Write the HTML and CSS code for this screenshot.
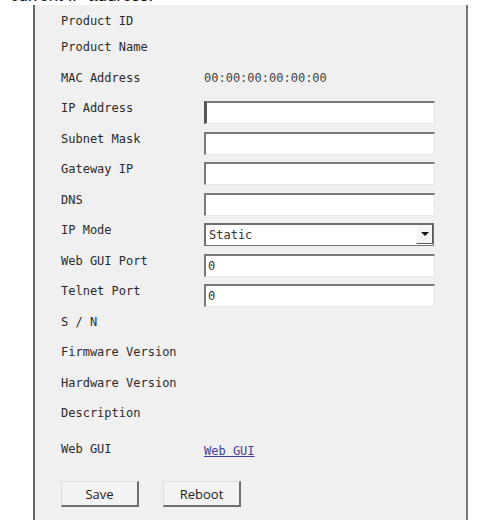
FILE: index.html
```html
<!DOCTYPE html>
<html>
<head>
  <title>device settings</title>
  <meta charset="utf-8">
  <link rel="stylesheet" href="styles.css">
</head>
<body>
  <p class="intro">current IP address.</p>
  <div class="panel">
    <div class="row first"><span class="label">Product ID</span></div>
    <div class="row"><span class="label">Product Name</span></div>
    <div class="row"><span class="label">MAC Address</span><span class="value">00:00:00:00:00:00</span></div>
    <div class="row"><span class="label">IP Address</span><input class="field focused" type="text" value=""></div>
    <div class="row"><span class="label">Subnet Mask</span><input class="field" type="text" value=""></div>
    <div class="row"><span class="label">Gateway IP</span><input class="field" type="text" value=""></div>
    <div class="row"><span class="label">DNS</span><input class="field" type="text" value=""></div>
    <div class="row">
      <span class="label">IP Mode</span>
      <div class="select-wrap">
        <select class="field select">
          <option>Static</option>
          <option>DHCP</option>
        </select>
        <span class="arrow"></span>
      </div>
    </div>
    <div class="row"><span class="label">Web GUI Port</span><input class="field" type="text" value="0"></div>
    <div class="row"><span class="label">Telnet Port</span><input class="field" type="text" value="0"></div>
    <div class="row"><span class="label">S / N</span></div>
    <div class="row"><span class="label">Firmware Version</span></div>
    <div class="row"><span class="label">Hardware Version</span></div>
    <div class="row"><span class="label">Description</span></div>
    <div class="row webgui"><span class="label">Web GUI</span><a class="link" href="#">Web GUI</a></div>
    <div class="actions">
      <button class="btn">Save</button>
      <button class="btn">Reboot</button>
    </div>
  </div>
</body>
</html>
```

FILE: styles.css
```css
body {
  margin: 0;
  background-color: #fff;
  font-family: "DejaVu Sans Mono", monospace;
  color: #2b2b2b;
}
.intro {
  margin: -13px 0 0;
  padding-left: 10px;
  height: 18px;
  font-family: "Liberation Sans", sans-serif;
  font-size: 17px;
  line-height: 17px;
  color: #111;
}
.panel {
  margin-left: 33px;
  width: 405px;
  height: 520px;
  padding: 5px 0 0 26px;
  background-color: #f0f0f0;
  border-left: 2px solid #666;
  border-right: 2px solid #777;
}
.row {
  display: flex;
  align-items: flex-start;
  height: 30.5px;
  font-size: 12px;
}
.row.first {
  height: 26px;
}
.row.webgui {
  margin-top: 5px;
}
.label {
  width: 143px;
  flex: none;
  padding-top: 3px;
  line-height: 16px;
}
.value {
  padding-top: 3px;
  line-height: 16px;
  color: #444;
}
.field {
  box-sizing: border-box;
  width: 231px;
  height: 23px;
  margin: 4px 0 0;
  padding: 0 2px;
  font-family: "DejaVu Sans Mono", monospace;
  font-size: 12px;
  color: #333;
  background-color: #fff;
  border-style: solid;
  border-width: 2px 1px 1px 2px;
  border-color: #7a7a7a #e4e4e4 #e8e8e8 #7a7a7a;
  outline: none;
}
.field.focused {
  border-left-width: 3px;
  border-left-color: #555;
}
.select-wrap {
  position: relative;
}
.select {
  appearance: none;
  -webkit-appearance: none;
  width: 230px;
  padding-left: 3px;
  border-width: 1px;
  border-color: #707070;
  border-top-width: 2px;
  border-left-width: 2px;
  border-radius: 0;
}
.arrow {
  position: absolute;
  right: 1px;
  top: 6px;
  width: 17px;
  height: 19px;
  box-sizing: border-box;
  background-color: #f4f4f4;
  border-right: 1px solid #555;
  border-bottom: 1px solid #555;
  border-left: 1px solid #fff;
}
.arrow::after {
  content: "";
  position: absolute;
  left: 4px;
  top: 7px;
  border-left: 4px solid transparent;
  border-right: 4px solid transparent;
  border-top: 4px solid #111;
}
.link {
  padding-top: 5px;
  line-height: 16px;
  color: #3f3f9c;
  text-decoration: underline;
}
.actions {
  display: flex;
  gap: 24px;
  margin-top: 13px;
}
.btn {
  box-sizing: border-box;
  width: 78px;
  height: 26px;
  padding: 0;
  font-family: "Open Sans", sans-serif;
  font-size: 13px;
  color: #222;
  background-color: #f3f3f3;
  border-style: solid;
  border-width: 1px 2px 2px 1px;
  border-color: #dcdcdc #6e6e6e #6e6e6e #dcdcdc;
}
```
